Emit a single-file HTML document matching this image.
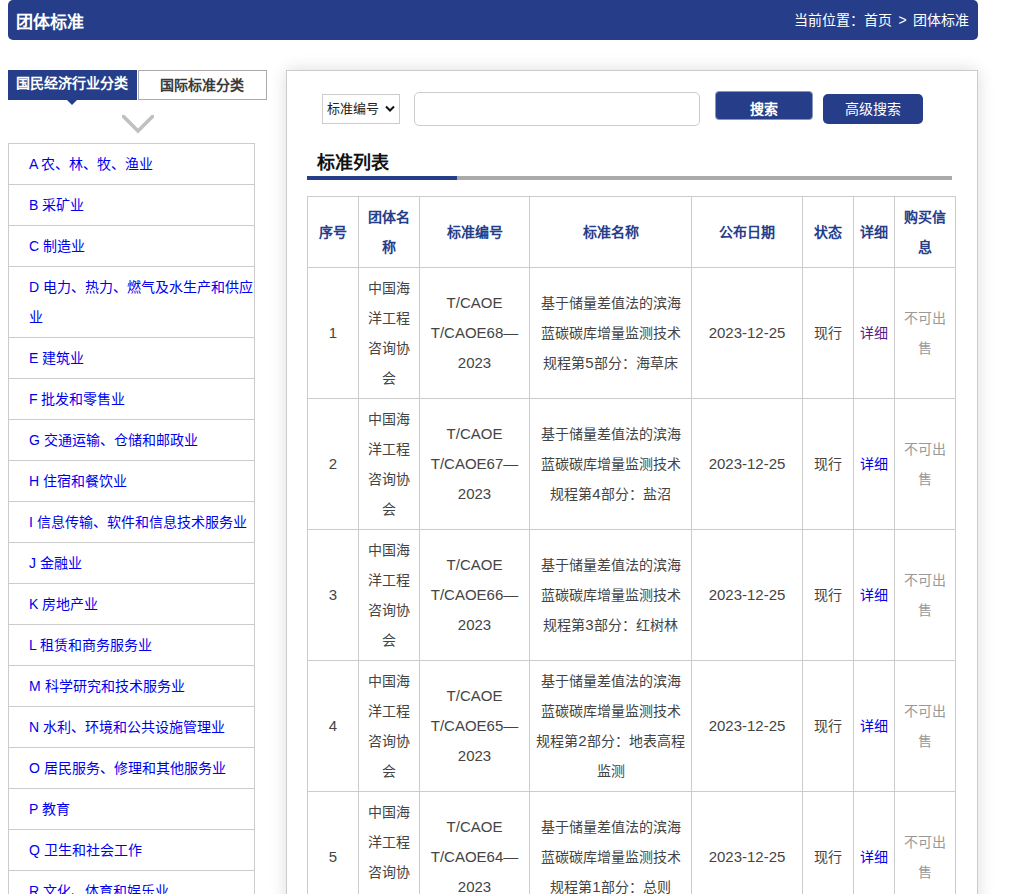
<!DOCTYPE html>
<html lang="zh-CN"><head><meta charset="utf-8">
<style>
*{box-sizing:border-box;margin:0;padding:0}
html,body{width:1018px;height:894px;overflow:hidden;background:#fff}
body{font-family:"Liberation Sans",sans-serif;font-size:14px;color:#333;position:relative}
.hd{position:absolute;left:8px;top:0;width:970px;height:40px;background:#263e8a;border-radius:5px;color:#fff}
.hd .t{position:absolute;left:8px;top:3px;line-height:40px;font-size:17px;font-weight:bold}
.hd .p{position:absolute;right:9px;top:0;line-height:40px;font-size:14px;word-spacing:2.5px}
.tab1{position:absolute;left:8px;top:70px;width:129px;height:30px;background:#263e8a;color:#fff;font-weight:bold;text-align:center;line-height:27px;padding-right:2px}
.tab1:after{content:"";position:absolute;left:59px;top:30px;border-left:5.5px solid transparent;border-right:5.5px solid transparent;border-top:5px solid #263e8a}
.tab2{position:absolute;left:138px;top:70px;width:129px;height:30px;border:1px solid #aaa;color:#3a3a3a;font-weight:bold;text-align:center;line-height:28px;padding-right:2px}
.chev{position:absolute;left:0;top:0}
ul.lst{position:absolute;left:8px;top:143px;width:247px;list-style:none;border:1px solid #ccc;border-bottom:none}
ul.lst li{border-bottom:1px solid #ccc;padding:5px 0 5px 20px;line-height:30px;white-space:nowrap}
ul.lst a{color:#0000ee}
.panel{position:absolute;left:286px;top:70px;width:692px;height:900px;border:1px solid #ccc;box-shadow:0 0 16px rgba(0,0,0,.14);background:#fff}
.sel{position:absolute;left:322px;top:94px;width:78px;height:30px;border:1px solid #ccc;font-size:13px;color:#222;line-height:28px;padding-left:4px}
.sel svg{position:absolute;left:62px;top:10px}
.inp{position:absolute;left:414px;top:92px;width:286px;height:34px;border:1px solid #ccc;border-radius:5px}
.btn1{position:absolute;left:715px;top:91px;width:98px;height:29px;border-radius:4px;background:#263e8a;color:#fff;font-weight:bold;text-align:center;line-height:34px;border:1px solid #8a96bd}
.btn2{position:absolute;left:823px;top:94px;width:100px;height:30px;border-radius:5px;background:#263e8a;color:#fff;text-align:center;line-height:30px}
.ttl{position:absolute;left:317px;top:149px;font-size:18px;font-weight:bold;color:#111;line-height:28px}
.ul1{position:absolute;left:307px;top:176px;width:645px;height:4px;background:#aaa}
.ul2{position:absolute;left:307px;top:176px;width:150px;height:4px;background:#263e8a}
table{position:absolute;left:307px;top:196px;border-collapse:collapse;table-layout:fixed;width:649px}
td,th{border:1px solid #ccc;padding:5px;line-height:30px;text-align:center;vertical-align:middle;white-space:nowrap;overflow:visible}
th{color:#263e8a;font-weight:bold;height:71px}
td{height:131px;color:#444}
.n{font-size:15px}
a.v{color:#551a8b}
a.l{color:#0000ee}
td.g{color:#999}
</style></head><body>
<div class="hd"><div class="t">团体标准</div><div class="p">当前位置：首页 &gt; 团体标准</div></div>
<div class="tab1">国民经济行业分类</div>
<div class="tab2">国际标准分类</div>
<svg class="chev" width="300" height="140"><polygon points="122,115 124.6,115 138,128.6 151.4,115 154,115 154,117.6 138,133.5 122,117.6" fill="#c0c0c0"/></svg>
<ul class="lst">
<li><a>A 农、林、牧、渔业</a></li>
<li><a>B 采矿业</a></li>
<li><a>C 制造业</a></li>
<li><a>D 电力、热力、燃气及水生产和供应<br>业</a></li>
<li><a>E 建筑业</a></li>
<li><a>F 批发和零售业</a></li>
<li><a>G 交通运输、仓储和邮政业</a></li>
<li><a>H 住宿和餐饮业</a></li>
<li><a>I 信息传输、软件和信息技术服务业</a></li>
<li><a>J 金融业</a></li>
<li><a>K 房地产业</a></li>
<li><a>L 租赁和商务服务业</a></li>
<li><a>M 科学研究和技术服务业</a></li>
<li><a>N 水利、环境和公共设施管理业</a></li>
<li><a>O 居民服务、修理和其他服务业</a></li>
<li><a>P 教育</a></li>
<li><a>Q 卫生和社会工作</a></li>
<li><a>R 文化、体育和娱乐业</a></li>
<li><a>S 公共管理、社会保障和社会组织</a></li>
</ul>
<div class="panel"></div>
<div class="sel">标准编号<svg width="10" height="8"><polyline points="1,1.5 5,5.5 9,1.5" fill="none" stroke="#111" stroke-width="2"/></svg></div>
<div class="inp"></div>
<div class="btn1">搜索</div>
<div class="btn2">高级搜索</div>
<div class="ttl">标准列表</div>
<div class="ul1"></div><div class="ul2"></div>
<table>
<colgroup><col style="width:51px"><col style="width:61px"><col style="width:110px"><col style="width:162px"><col style="width:111px"><col style="width:51px"><col style="width:41px"><col style="width:61px"></colgroup>
<tr><th>序号</th><th>团体名<br>称</th><th>标准编号</th><th>标准名称</th><th>公布日期</th><th>状态</th><th>详细</th><th>购买信<br>息</th></tr>
<tr><td><span class="n">1</span></td><td>中国海<br>洋工程<br>咨询协<br>会</td><td><span class="n">T/CAOE<br>T/CAOE68—<br>2023</span></td><td>基于储量差值法的滨海<br>蓝碳碳库增量监测技术<br>规程第<span class="n">5</span>部分：海草床</td><td><span class="n">2023-12-25</span></td><td>现行</td><td><a class="v">详细</a></td><td class="g">不可出<br>售</td></tr>
<tr><td><span class="n">2</span></td><td>中国海<br>洋工程<br>咨询协<br>会</td><td><span class="n">T/CAOE<br>T/CAOE67—<br>2023</span></td><td>基于储量差值法的滨海<br>蓝碳碳库增量监测技术<br>规程第<span class="n">4</span>部分：盐沼</td><td><span class="n">2023-12-25</span></td><td>现行</td><td><a class="l">详细</a></td><td class="g">不可出<br>售</td></tr>
<tr><td><span class="n">3</span></td><td>中国海<br>洋工程<br>咨询协<br>会</td><td><span class="n">T/CAOE<br>T/CAOE66—<br>2023</span></td><td>基于储量差值法的滨海<br>蓝碳碳库增量监测技术<br>规程第<span class="n">3</span>部分：红树林</td><td><span class="n">2023-12-25</span></td><td>现行</td><td><a class="l">详细</a></td><td class="g">不可出<br>售</td></tr>
<tr><td><span class="n">4</span></td><td>中国海<br>洋工程<br>咨询协<br>会</td><td><span class="n">T/CAOE<br>T/CAOE65—<br>2023</span></td><td>基于储量差值法的滨海<br>蓝碳碳库增量监测技术<br>规程第<span class="n">2</span>部分：地表高程<br>监测</td><td><span class="n">2023-12-25</span></td><td>现行</td><td><a class="l">详细</a></td><td class="g">不可出<br>售</td></tr>
<tr><td><span class="n">5</span></td><td>中国海<br>洋工程<br>咨询协<br>会</td><td><span class="n">T/CAOE<br>T/CAOE64—<br>2023</span></td><td>基于储量差值法的滨海<br>蓝碳碳库增量监测技术<br>规程第<span class="n">1</span>部分：总则</td><td><span class="n">2023-12-25</span></td><td>现行</td><td><a class="l">详细</a></td><td class="g">不可出<br>售</td></tr>
</table>
</body></html>
